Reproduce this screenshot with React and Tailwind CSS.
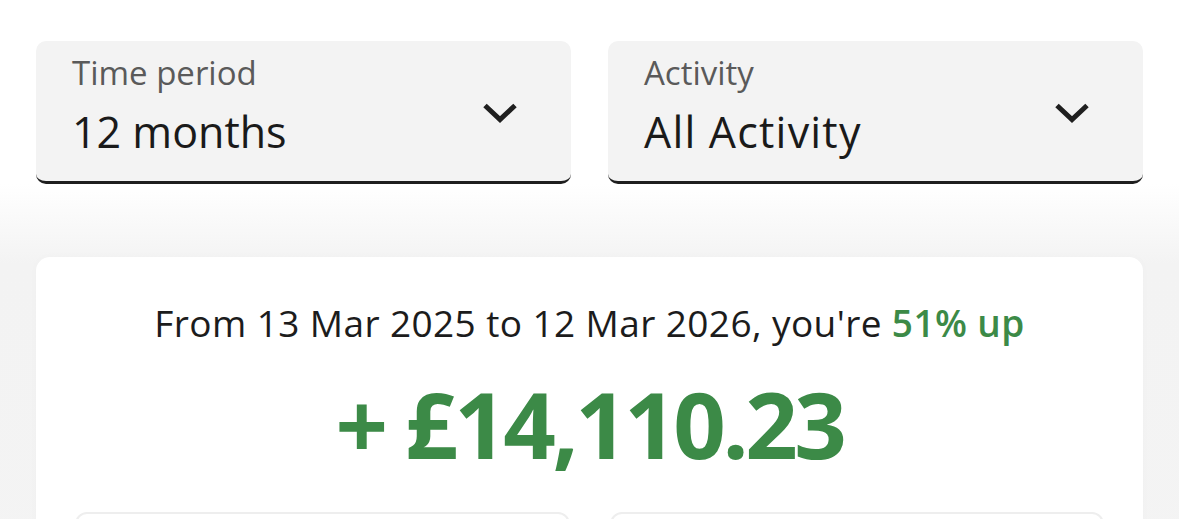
import React from "react";

function Chevron() {
  return (
    <svg width="36" height="22" viewBox="0 0 36 22" className="shrink-0">
      <path d="M3 3.5 L18 17.5 L33 3.5" fill="none" stroke="#1f1f1f" strokeWidth="5" strokeLinejoin="miter" />
    </svg>
  );
}

function Dropdown({ label, value, track }) {
  return (
    <div className="h-[143px] box-border rounded-[10px] border-b-[3px] border-[#1e1e1e] bg-[#f3f3f3] pl-[36px] pr-[53px] pt-[12px] flex items-start justify-between">
      <div className="flex flex-col">
        <span className="text-[33px] leading-[40px] text-[#5a5a5a]">{label}</span>
        <span className={"mt-[13px] text-[43px] leading-[52px] text-[#1a1a1a] " + (track ? "tracking-[1.2px]" : "")}>{value}</span>
      </div>
      <div className="mt-[49px]">
        <Chevron />
      </div>
    </div>
  );
}

export default function App() {
  return (
    <div
      className="min-h-screen bg-white overflow-hidden"
      style={{ fontFamily: '"Open Sans", "Noto Sans", sans-serif' }}
    >
      <div className="px-[36px] pt-[41px] grid grid-cols-2 gap-[37px] w-[1179px] box-border">
        <Dropdown label="Time period" value="12 months" />
        <Dropdown label="Activity" value="All Activity" track />
      </div>
      <div className="px-[36px] pt-[73px] pb-[40px] w-[1179px] box-border bg-[linear-gradient(to_bottom,#ffffff_0px,#f3f3f3_80px,#f4f4f4_100%)]">
        <div className="rounded-[14px] bg-white shadow-[0_0_10px_rgba(0,0,0,0.02)] px-[39px] pt-[44px] pb-[40px]">
          <p className="text-center text-[37px] leading-[44px] text-[#1c1c1c] tracking-[0.4px] whitespace-nowrap">
            From 13 Mar 2025 to 12 Mar 2026, you're{" "}
            <span className="font-semibold text-[#3c8a47]">51% up</span>
          </p>
          <p className="mt-[29px] text-center text-[92px] leading-[100px] font-bold text-[#3c8a47] tracking-[-3.5px]">
            + £14,110.23
          </p>
          <div className="mt-[38px] grid grid-cols-2 gap-[40px]">
            <div className="h-[120px] rounded-[12px] border-2 border-[#eeeeee] bg-white"></div>
            <div className="h-[120px] rounded-[12px] border-2 border-[#eeeeee] bg-white"></div>
          </div>
        </div>
      </div>
    </div>
  );
}
